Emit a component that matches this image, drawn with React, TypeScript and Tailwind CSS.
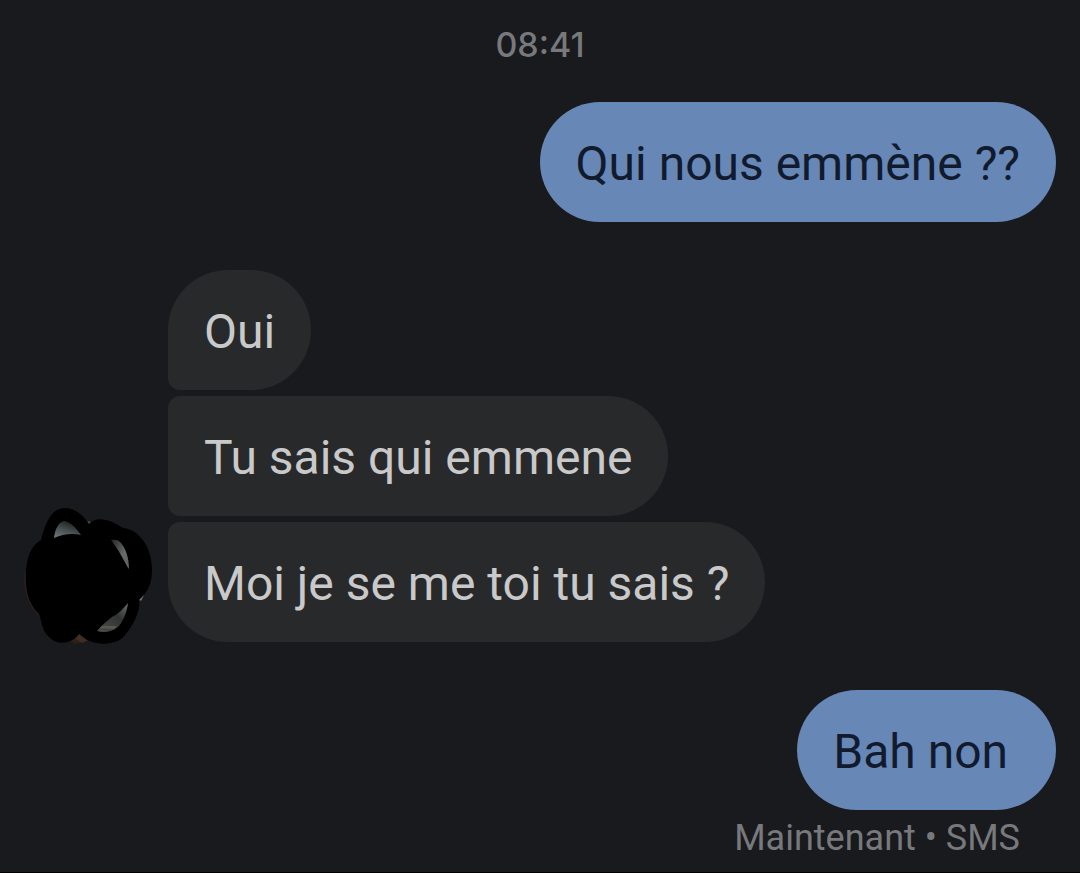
type Corner = "single" | "first" | "middle" | "last";

const corners: Record<Corner, string> = {
  single: "rounded-[60px]",
  first: "rounded-[60px] rounded-bl-xl",
  middle: "rounded-[60px] rounded-l-xl",
  last: "rounded-[60px] rounded-tl-xl",
};

function Bubble({ text, sent = false, corner = "single" }: { text: string; sent?: boolean; corner?: Corner }) {
  const tone = sent ? "bg-[#6787b7] text-[#111b2d]" : "bg-[#28292a] text-[#c9c9ca]";
  return (
    <p className={`w-fit px-9 pt-[34px] pb-[30px] text-5xl leading-[56px] whitespace-pre-wrap ${corners[corner]} ${tone}`}>
      {text}
    </p>
  );
}

function Avatar() {
  return (
    <svg viewBox="-2 -1 160 160" className="size-40 shrink-0" role="img" aria-label="Contact">
      <defs>
        <linearGradient id="shineTop" x1="0.2" y1="1" x2="0.7" y2="0">
          <stop offset="0" stopColor="#6d7577" />
          <stop offset="0.5" stopColor="#454c4d" />
          <stop offset="1" stopColor="#17191a" />
        </linearGradient>
        <linearGradient id="shineSide" x1="0" y1="0" x2="1" y2="1">
          <stop offset="0" stopColor="#242626" />
          <stop offset="0.6" stopColor="#686b6b" />
          <stop offset="1" stopColor="#5a5e5e" />
        </linearGradient>
        <linearGradient id="shineBottom" x1="1" y1="0" x2="0" y2="1">
          <stop offset="0" stopColor="#6a6e6e" />
          <stop offset="0.4" stopColor="#303333" />
          <stop offset="1" stopColor="#4d4f49" />
        </linearGradient>
      </defs>
      <path d="M15 76C13 88 15 101 22 113L35 128L65 149L83 145L66 132L32 105Z" fill="#2b211a" />
      <path d="M63 142L70 138L78 145L72 148Z" fill="#3f2e22" />
      <path d="M74 28L79 26L84 29L80 34Z" fill="#454949" />
      <path d="M127 103L134 100L131 106Z" fill="#777a79" />
      <path
        d="M31 45C35 31 40 13 55 13C65 13 73 20 79 29C87 20 101 25 113 33C131 35 142 54 142 75C142 88 138 97 129 105C131 116 123 130 116 139C109 150 90 151 77 145L69 139C62 149 47 151 39 142C32 136 32 127 29 119C18 109 15 94 16 77C17 62 20 52 31 45Z"
        fill="#000"
      />
      <path d="M44 43C45 35 48 27 54 26C61 27 66 33 71 40C62 38 53 39 44 43Z" fill="url(#shineTop)" />
      <path d="M101 45C105 44 109 45 111 48C116 54 119 63 119 74C115 69 113 61 101 45Z" fill="url(#shineSide)" />
      <path d="M87 136C92 130 97 126 102 122C108 119 113 114 118 108C117 117 113 127 108 132C102 137 94 138 87 136Z" fill="url(#shineBottom)" />
      <path d="M92 131L107 131L104 134L90 133Z" fill="#575950" />
    </svg>
  );
}

export default function App() {
  return (
    <main className="min-h-screen border-b border-black bg-[#191a1d] px-6 pt-6 font-['Roboto',sans-serif]">
      <time dateTime="08:41" className="block text-center font-['Inter',sans-serif] text-[34px] leading-[42px] font-medium text-[#77797c]">
        08:41
      </time>
      <section className="mt-9 flex justify-end">
        <Bubble sent text="Qui nous emmène ??" />
      </section>
      <section className="mt-12 flex items-end">
        <div className="-mb-3 -ml-4 flex shrink-0">
          <Avatar />
        </div>
        <div className="flex min-w-0 flex-col items-start gap-1.5">
          <Bubble corner="first" text="Oui" />
          <Bubble corner="middle" text="Tu sais qui emmene" />
          <Bubble corner="last" text="Moi je se me toi tu sais ?" />
        </div>
      </section>
      <section className="mt-12 flex flex-col items-end">
        <Bubble sent text={"Bah non\u00a0"} />
        <p className="mt-1 pr-9 text-4xl leading-[48px] text-[#77797c]">Maintenant • SMS</p>
      </section>
    </main>
  );
}
